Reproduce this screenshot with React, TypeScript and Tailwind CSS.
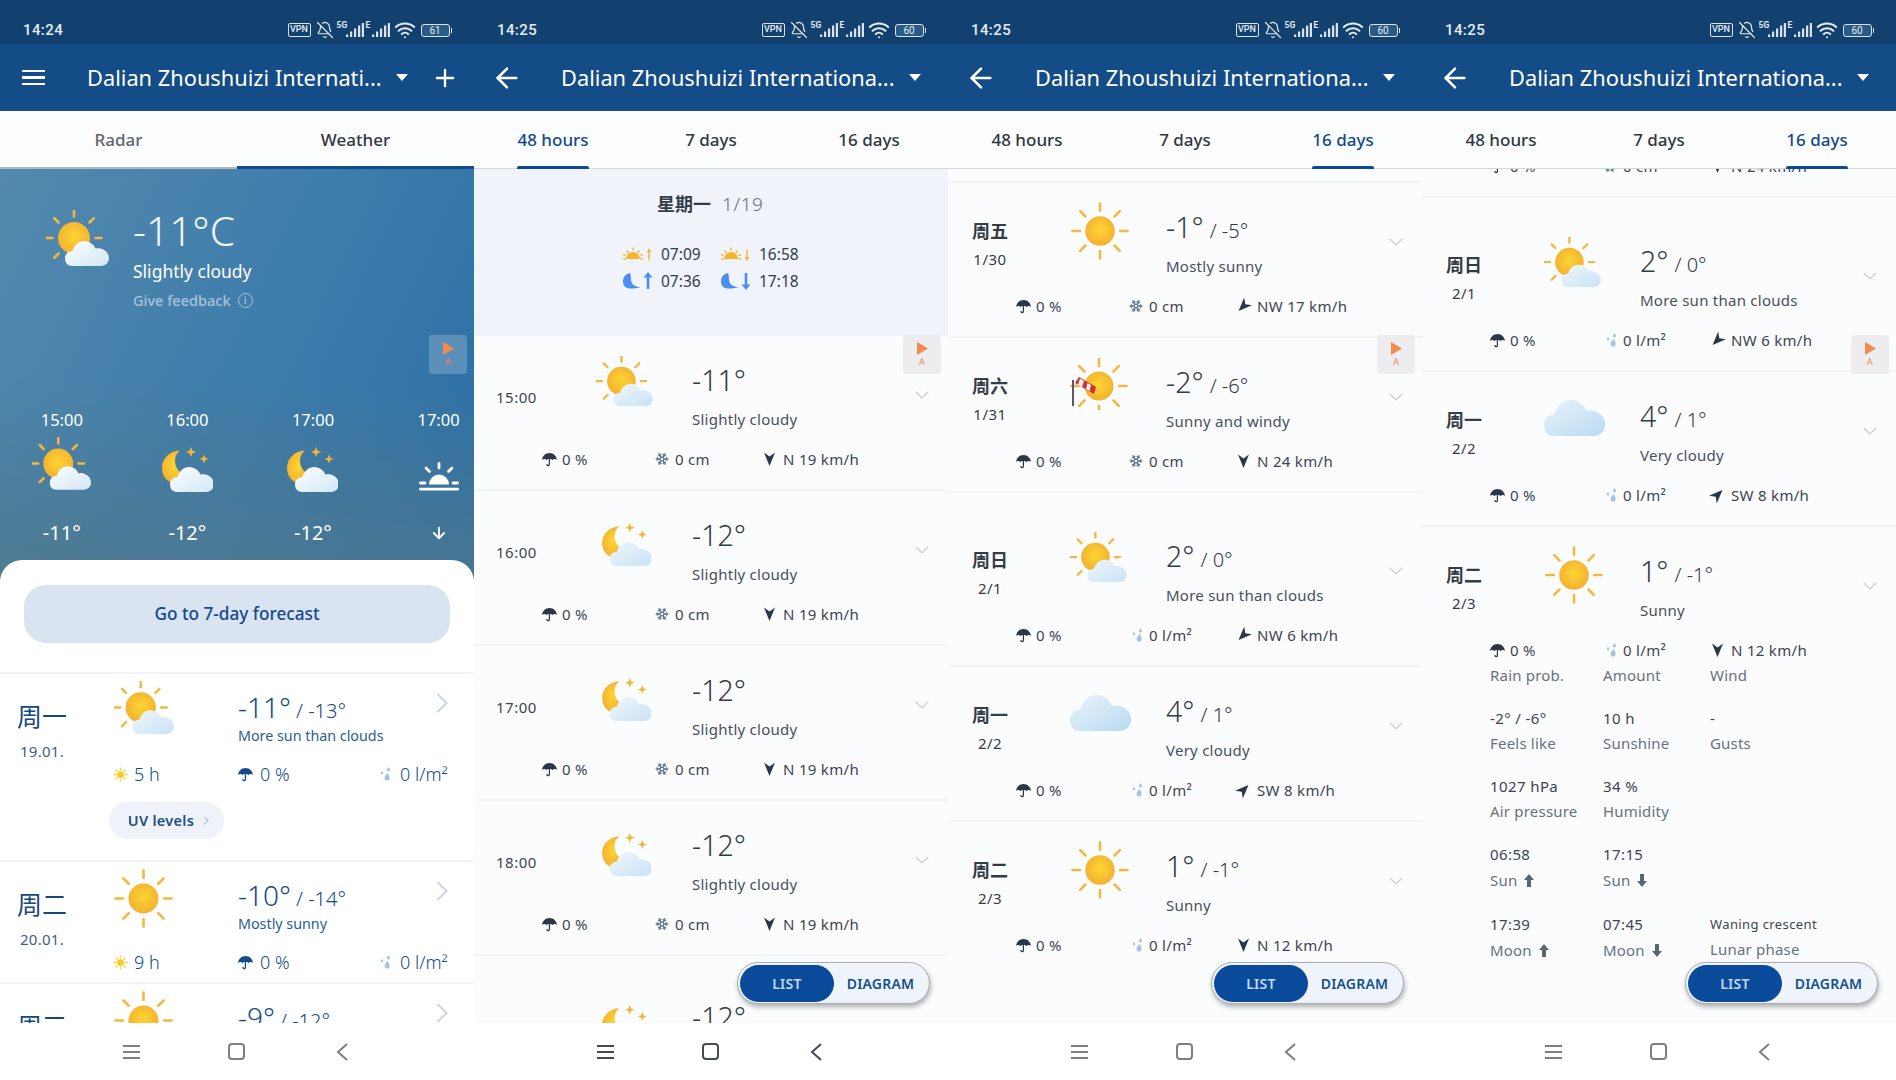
import React from 'react';
import { ArrowDown, ArrowLeft, BellOff, ChevronRight, Plus, Snowflake, Wifi } from 'lucide-react';

const CLOUD = 'M26 56C21 56 19 52 19 48.5 19 44 22 41 26.5 41 28 35 33 31 38 31 44 31 48 35 49.5 38.5 51 38 53 38 55 38.5 60 40 63 44 63 48 63 53 59 56 55 56Z';

const Defs = () => (
  <svg className="absolute h-0 w-0">
    <defs>
      <radialGradient id="sunG" cx="50%" cy="45%" r="60%">
        <stop offset="0%" stopColor="#fdd534" />
        <stop offset="100%" stopColor="#f2ad2f" />
      </radialGradient>
      <linearGradient id="cloudG" x1="0" y1="0" x2="1" y2="1">
        <stop offset="0%" stopColor="#fcfeff" />
        <stop offset="100%" stopColor="#d3e7f6" />
      </linearGradient>
      <linearGradient id="cloudL" x1="0" y1="0" x2="1" y2="1">
        <stop offset="0%" stopColor="#f0f7fc" />
        <stop offset="100%" stopColor="#c8e2f5" />
      </linearGradient>
      <linearGradient id="cloudB" x1="0" y1="0" x2="1" y2="1">
        <stop offset="0%" stopColor="#e9f3fb" />
        <stop offset="100%" stopColor="#b9daf2" />
      </linearGradient>
    </defs>
  </svg>
);

const Rays = ({ cx, cy, a, b, all = true }: { cx: number; cy: number; a: number; b: number; all?: boolean }) => {
  const k = 0.72;
  const list = [
    [0, -1],
    [-1, 0],
    [1, 0],
    [-k, -k],
    [k, -k],
    [-k, k],
  ];
  if (all) list.push([0, 1], [k, k]);
  return (
    <g stroke="#f4b83f" strokeWidth="2.6" strokeLinecap="round">
      {list.map(([x, y], i) => (
        <line key={i} x1={cx + x * a} y1={cy + y * a} x2={cx + x * b} y2={cy + y * b} />
      ))}
    </g>
  );
};

const SunCloud = ({ className, list }: { className: string; list?: boolean }) => (
  <svg viewBox="0 0 64 57" className={className}>
    <Rays cx={28} cy={28} a={21.5} b={27.5} all={false} />
    <circle cx="28" cy="28" r="16" fill="url(#sunG)" />
    <path d={CLOUD} fill={list ? 'url(#cloudL)' : 'url(#cloudG)'} />
  </svg>
);

const MoonCloud = ({ className, list }: { className: string; list?: boolean }) => (
  <svg viewBox="0 0 51 45" className={className}>
    <path d="M18 3.5C8 4 0 11 0 21 0 30 6 36 14 37L23 27C16 26 13 19 13 14 13 9 15 6 18 3.5Z" fill="url(#sunG)" />
    <path d="M29 0 30.4 3.6 34 5 30.4 6.4 29 10 27.6 6.4 24 5 27.6 3.6ZM42 7.5 43.3 10.7 46.5 12 43.3 13.3 42 16.5 40.7 13.3 37.5 12 40.7 10.7Z" fill="#f5b52f" />
    <g transform="translate(-11 -11)">
      <path d={CLOUD} fill={list ? 'url(#cloudL)' : 'url(#cloudG)'} />
    </g>
  </svg>
);

const Sun = ({ className }: { className: string }) => (
  <svg viewBox="0 0 59 59" className={className}>
    <Rays cx={29.5} cy={29.5} a={20.5} b={28} />
    <circle cx="29.5" cy="29.5" r="15" fill="url(#sunG)" />
  </svg>
);

const CloudOnly = ({ className }: { className: string }) => (
  <svg viewBox="0 0 61 36" className={className}>
    <g transform="scale(1.39 1.44) translate(-19 -31)">
      <path d={CLOUD} fill="url(#cloudB)" />
    </g>
  </svg>
);

const SunWind = ({ className }: { className: string }) => (
  <svg viewBox="0 0 60 52" className={className}>
    <Rays cx={29} cy={28} a={20} b={27.5} />
    <circle cx="29" cy="28" r="14.5" fill="url(#sunG)" />
    <rect x="2" y="22" width="2" height="26" fill="#555c66" />
    <path d="M5 25 9 19 26 29 24 36Z" fill="#d42f35" />
    <path d="M10 20.5 14 23 12 29 8 27ZM17.5 25 21 27 19.5 33 16 31Z" fill="#f6f6f6" />
  </svg>
);

const Sunset = () => (
  <svg viewBox="0 0 40 29" className="h-[29px] w-[40px]">
    <path d="M10 22.5A10 10 0 0 1 30 22.5Z" fill="#fff" />
    <g stroke="#fff" strokeWidth="2.8" strokeLinecap="round">
      <line x1="20" y1="1.5" x2="20" y2="6" />
      <line x1="7" y1="6" x2="10.5" y2="9.5" />
      <line x1="33" y1="6" x2="29.5" y2="9.5" />
      <line x1="1.5" y1="21" x2="6" y2="21" />
      <line x1="34" y1="21" x2="38.5" y2="21" />
      <line x1="1.5" y1="27.2" x2="38.5" y2="27.2" />
    </g>
  </svg>
);

const Umbrella = ({ className = '' }: { className?: string }) => (
  <svg viewBox="0 0 15 15" className={`h-[15px] w-[15px] ${className}`} fill="currentColor">
    <path d="M7.5 1C3.5 1 .6 3.9 0 7.8 1.5 6.7 3 6.7 4.6 7.9 5.3 7.1 6 6.9 6.8 6.9V12.2C6.8 13 6.2 13.1 5.9 12.9 5.6 12.7 5.5 12.3 5.5 12H4.3C4.3 13.3 5 14.3 6.2 14.3 7.4 14.3 8 13.4 8 12.2V6.9C9 6.9 9.7 7.1 10.4 7.9 12 6.7 13.5 6.7 15 7.8 14.4 3.9 11.5 1 7.5 1Z" />
  </svg>
);

const Drops = ({ className = '' }: { className?: string }) => (
  <svg viewBox="0 0 12 14" className={`h-[14px] w-[12px] ${className}`} fill="#a6c1e3">
    <path d="M8.5 0C9 1.2 10 1.8 10 3 10 3.9 9.3 4.4 8.5 4.4 7.7 4.4 7 3.9 7 3 7 1.8 8 1.2 8.5 0Z" />
    <path d="M2 3.8C2.4 4.8 3.2 5.3 3.2 6.2 3.2 7 2.7 7.4 2 7.4 1.3 7.4.8 7 .8 6.2.8 5.3 1.6 4.8 2 3.8Z" />
    <path d="M7.5 6C8.2 7.6 9.6 8.6 9.6 10.4 9.6 12 8.7 13.6 7.1 13.6 5.6 13.6 4.6 12.4 4.6 10.7 4.6 8.8 6.6 7.8 7.5 6Z" />
  </svg>
);

const WindArrow = ({ className = '' }: { className?: string }) => (
  <svg viewBox="0 0 11 14" className={`h-[14px] w-[11px] ${className}`} fill="#2b3646">
    <path d="M0 .5 5.5 4.5 11 .5 5.5 14Z" />
  </svg>
);

const Flake = () => <Snowflake size={14} strokeWidth={2.4} color="#6c7c8f" />;

const FatArrow = ({ up }: { up: boolean }) => (
  <svg viewBox="0 0 10 13" className={`ml-[7px] h-[13px] w-[10px] ${up ? '' : 'rotate-180'}`} fill="#5a6572">
    <path d="M5 0 10 6H7V13H3V6H0Z" />
  </svg>
);

const PlayBadge = ({ light }: { light?: boolean }) => (
  <div className={`absolute right-[7px] top-[335px] flex h-[39px] w-[38px] flex-col items-center rounded-[3px] pt-[7px] ${light ? 'bg-white/20' : 'bg-[#ededf0]'}`}>
    <svg viewBox="0 0 12 14" className="h-[13px] w-[11px]">
      <path d="M0 0 12 7 0 14Z" fill="#f28b4b" />
    </svg>
    <span className="mt-[1px] text-[9px] leading-[12px] text-[#f28b4b]">A</span>
  </div>
);

const Bars = () => (
  <svg viewBox="0 0 18 14" className="h-[14px] w-[18px]" fill="#dbe4ee">
    <rect x="0" y="11.5" width="2.2" height="2.5" />
    <rect x="4" y="8.5" width="2.2" height="5.5" />
    <rect x="8" y="5.5" width="2.2" height="8.5" />
    <rect x="12" y="2.5" width="2.2" height="11.5" />
    <rect x="15.8" y="0" width="2.2" height="14" />
  </svg>
);

const StatusBar = ({ time, battery }: { time: string; battery: string }) => (
  <div className="flex h-[44px] shrink-0 items-center bg-[#13416f] pl-[23px] pr-[22px] pt-[16px] text-[#e4ebf2]">
    <span className="font-['Roboto',sans-serif] text-[15px] font-medium tracking-[0.4px]">{time}</span>
    <div className="ml-auto flex items-center">
      <span className="flex h-[14px] w-[23px] items-center justify-center rounded-[2px] border border-[#dbe4ee] font-['Roboto',sans-serif] text-[9px] font-medium">VPN</span>
      <BellOff size={18} strokeWidth={1.6} className="ml-[5px]" />
      <div className="relative ml-[3px] flex items-end pl-[9px]">
        <span className="absolute left-0 top-[-4px] font-['Roboto',sans-serif] text-[8.5px] font-bold">5G</span>
        <Bars />
      </div>
      <div className="relative ml-[2px] flex items-end pl-[6px]">
        <span className="absolute left-0 top-[-4px] font-['Roboto',sans-serif] text-[8.5px] font-bold">E</span>
        <Bars />
      </div>
      <Wifi size={22} strokeWidth={2.2} className="ml-[4px]" />
      <div className="ml-[5px] flex items-center">
        <span className="flex h-[13px] w-[29px] items-center justify-center rounded-[3px] border border-[#dbe4ee] bg-[#3b6a97]/60 font-['Roboto',sans-serif] text-[10px]">{battery}</span>
        <span className="ml-[1px] h-[5px] w-[1.5px] bg-[#dbe4ee]" />
      </div>
    </div>
  </div>
);

const Caret = () => (
  <svg viewBox="0 0 12 7" className="h-[7px] w-[12px]">
    <path d="M0 0H12L6 7Z" fill="#fff" />
  </svg>
);

const Header = ({ title, first, plus }: { title: string; first: React.ReactNode; plus?: boolean }) => (
  <div className="flex h-[67px] shrink-0 items-center bg-[#134c86] text-white">
    <div className="w-[87px] shrink-0 pl-[22px]">{first}</div>
    <span className="whitespace-nowrap pt-[1px] text-[21.8px]">{title}</span>
    <div className="ml-[14px]">
      <Caret />
    </div>
    {plus && <Plus size={28} strokeWidth={2} className="ml-[23px]" />}
  </div>
);

const Burger = () => (
  <div className="flex w-[23px] flex-col gap-[4px]">
    <span className="h-[2.5px] bg-white" />
    <span className="h-[2.5px] bg-white" />
    <span className="h-[2.5px] bg-white" />
  </div>
);

const Back = () => <ArrowLeft size={32} strokeWidth={1.9} className="-ml-[5px]" />;

const DayTabs = ({ active }: { active: number }) => (
  <div className="grid h-[58px] shrink-0 grid-cols-3 border-b border-[#d3d7de] bg-[#fcfdfe] text-[17px] font-medium">
    {['48 hours', '7 days', '16 days'].map((t, i) => (
      <div key={t} className={`flex items-center justify-center ${i === active ? 'text-[#13498c]' : 'text-[#2e3742]'}`}>
        <div className="relative flex h-full items-center">
          {t}
          {i === active && <span className="absolute bottom-[-1px] left-0 right-0 h-[3px] rounded-t-[2px] bg-[#0b4a9a]" />}
        </div>
      </div>
    ))}
  </div>
);

const NavBar = ({ dark }: { dark?: boolean }) => {
  const c = dark ? 'border-[#444b54]' : 'border-[#7b7f85]';
  const b = dark ? 'bg-[#444b54]' : 'bg-[#7b7f85]';
  return (
    <div className="flex h-[57px] shrink-0 items-center bg-white pl-[123px]">
      <div className="flex w-[17px] flex-col gap-[4px]">
        <span className={`h-[2px] ${b}`} />
        <span className={`h-[2px] ${b}`} />
        <span className={`h-[2px] ${b}`} />
      </div>
      <div className={`ml-[88px] h-[17px] w-[17px] rounded-[4px] border-2 ${c}`} />
      <svg viewBox="0 0 12 18" className="ml-[91px] h-[18px] w-[12px]" fill="none" stroke={dark ? '#444b54' : '#7b7f85'} strokeWidth="2">
        <path d="M11 1 2 9 11 17" />
      </svg>
    </div>
  );
};

const Chevron = () => (
  <svg viewBox="0 0 14 8" className="h-[8px] w-[14px]" fill="none" stroke="#c6cdd6" strokeWidth="1.2">
    <path d="M1 1 7 7 13 1" />
  </svg>
);

const BlueChevron = () => (
  <svg viewBox="0 0 12 20" className="h-[20px] w-[12px]" fill="none" stroke="#c8d3e3" strokeWidth="1.8">
    <path d="M1.5 1 10.5 10 1.5 19" />
  </svg>
);

interface StatProps {
  wind: string;
  windClass?: string;
  amount?: boolean;
}

const Stats = ({ wind, windClass, amount }: StatProps) => (
  <div className="flex h-[24px] items-center pl-[68px] text-[15px] tracking-[0.3px] text-[#3b4552]">
    <div className="flex w-[113px] items-center">
      <div className="w-[20px]">
        <Umbrella className="text-[#2b3646]" />
      </div>
      0 %
    </div>
    <div className="flex w-[108px] items-center">
      <div className="w-[20px]">{amount ? <Drops className="ml-[3px]" /> : <Flake />}</div>
      {amount ? '0 l/m²' : '0 cm'}
    </div>
    <div className="flex items-center">
      <div className="w-[20px] pl-[1px]">
        <WindArrow className={windClass} />
      </div>
      {wind}
    </div>
  </div>
);

const TimeCell = ({ t }: { t: string }) => <div className="pl-[22px] pt-[49px] text-[15px] leading-[24px] tracking-[0.5px] text-[#3b4552]">{t}</div>;

const DayCell = ({ d, date }: { d: string; date: string }) => (
  <div className="w-[84px] pt-[34px] text-center text-[#343c47]">
    <div className="text-[18px] font-bold leading-[28px]">{d}</div>
    <div className="mt-[2px] text-[15px] leading-[24px] tracking-[0.5px]">{date}</div>
  </div>
);

interface RowProps {
  left: React.ReactNode;
  icon: React.ReactNode;
  hi: string;
  lo?: string;
  desc: string;
  tall?: boolean;
  last?: boolean;
  stats: StatProps;
  children?: React.ReactNode;
}

const Row = ({ left, icon, hi, lo, desc, tall, last, stats, children }: RowProps) => (
  <div className={`${last ? 'pb-[100px]' : 'border-b-2 border-[#f2f4fa]'} ${tall ? 'h-[174px] pt-[19px]' : last ? '' : 'h-[155px]'}`}>
    <div className="flex h-[111px]">
      <div className="w-[122px] shrink-0">{left}</div>
      <div className="w-[96px] shrink-0 pt-[20px]">{icon}</div>
      <div className="flex-1 pt-[24px] text-[#343c47]">
        <div className="flex h-[40px] items-baseline whitespace-nowrap font-light">
          <span className="text-[28.5px] leading-[40px]">{hi}</span>
          {lo && <span className="ml-[6px] text-[20px] leading-[40px]">/ {lo}</span>}
        </div>
        <div className="mt-[7px] text-[15px] leading-[24px] tracking-[0.25px] text-[#47505c]">{desc}</div>
      </div>
      <div className="flex w-[52px] shrink-0 justify-center pt-[55px]">
        <div className="h-[8px]">
          <Chevron />
        </div>
      </div>
    </div>
    <Stats {...stats} />
    {children}
  </div>
);

const DetailCell = ({ v, l, small, arrow }: { v: string; l: string; small?: boolean; arrow?: 'up' | 'down' }) => (
  <div>
    <div className={`flex h-[25px] items-center whitespace-nowrap tracking-[0.4px] text-[#3b4552] ${small ? 'text-[13px]' : 'text-[15px]'}`}>{v}</div>
    <div className={`flex items-center whitespace-nowrap tracking-[0.2px] text-[#68717d] ${arrow ? 'h-[26px]' : 'h-[25px]'}`}>
      {l}
      {arrow && <FatArrow up={arrow === 'up'} />}
    </div>
  </div>
);

const Toggle = () => (
  <div className="absolute bottom-[76px] right-[18px] flex h-[42px] w-[193px] items-center rounded-full border border-[#a9adb3] bg-[#eff3fa] p-[2px] shadow-[1px_3px_5px_rgba(0,0,0,0.3)]">
    <div className="flex h-[37px] w-[94px] items-center justify-center rounded-full bg-[#0a4a9b] text-[14px] font-semibold tracking-[0.3px] text-[#c3d8f2]">LIST</div>
    <div className="flex-1 text-center text-[14px] font-semibold tracking-[0.2px] text-[#13508f]">DIAGRAM</div>
  </div>
);

const Phone = ({ children }: { children: React.ReactNode }) => <div className="relative flex h-[1080px] w-[474px] shrink-0 flex-col overflow-hidden bg-white">{children}</div>;

const hours = [
  { t: '15:00', v: '-11°', icon: <SunCloud className="h-[54px] w-[60px]" /> },
  { t: '16:00', v: '-12°', icon: <MoonCloud className="mt-[10px] h-[45px] w-[51px]" /> },
  { t: '17:00', v: '-12°', icon: <MoonCloud className="mt-[10px] h-[45px] w-[51px]" /> },
];

const hist = [
  { d: '周一', date: '19.01.', icon: <SunCloud list className="h-[54px] w-[61px]" />, hi: '-11°', lo: '-13°', desc: 'More sun than clouds', sun: '5 h', uv: true },
  { d: '周二', date: '20.01.', icon: <Sun className="h-[59px] w-[59px]" />, hi: '-10°', lo: '-14°', desc: 'Mostly sunny', sun: '9 h', uv: false },
  { d: '周三', date: '21.01.', icon: <Sun className="h-[59px] w-[59px]" />, hi: '-9°', lo: '-12°', desc: 'Mostly sunny', sun: '9 h', uv: false },
];

const SunTiny = () => (
  <svg viewBox="0 0 16 16" className="h-[15px] w-[15px]">
    <g stroke="#fbd32d" strokeWidth="1.4" strokeLinecap="round">
      {[0, 45, 90, 135, 180, 225, 270, 315].map(a => (
        <line key={a} x1="8" y1="1" x2="8" y2="3" transform={`rotate(${a} 8 8)`} />
      ))}
    </g>
    <circle cx="8" cy="8" r="3.6" fill="#fccb20" />
  </svg>
);

const SunRiseMini = ({ up }: { up: boolean }) => (
  <svg viewBox="0 0 30 14" className="h-[14px] w-[30px]">
    <path d="M3 13A7 7 0 0 1 17 13Z" fill="#f9b42d" transform="translate(0 -1)" />
    <g stroke="#f9b42d" strokeWidth="1.4" strokeLinecap="round">
      <line x1="10" y1="1" x2="10" y2="3" />
      <line x1="4" y1="4" x2="5" y2="5.5" />
      <line x1="16" y1="4" x2="15" y2="5.5" />
      <line x1="0.5" y1="8" x2="2" y2="8" />
      <line x1="18" y1="8" x2="19.5" y2="8" />
      <line x1="0.5" y1="12" x2="2" y2="12" />
      <line x1="18" y1="12" x2="19.5" y2="12" />
      <line x1="26" y1="3" x2="26" y2="13" />
    </g>
    <path d={up ? 'M23.5 5 26 1.5 28.5 5Z' : 'M23.5 10 26 13.5 28.5 10Z'} fill="#f9b42d" />
  </svg>
);

const MoonMini = ({ up }: { up: boolean }) => (
  <svg viewBox="0 0 30 18" className="h-[18px] w-[30px]">
    <path d="M7 1C2.5 2 0 5 0 9.5 0 14 3 16.5 7.5 16.5 11 16.5 14 16 18 15 12 15 8.5 12.5 8 8 7.8 5.5 8 3.5 7 1Z" fill="#4a8ff0" />
    <path d={up ? 'M25 0 29.5 5.5H26.3V17H23.7V5.5H20.5Z' : 'M25 18 29.5 12.5H26.3V1H23.7V12.5H20.5Z'} fill="#4a8ff0" />
  </svg>
);

const details = [
  [
    { v: '-2° / -6°', l: 'Feels like' },
    { v: '10 h', l: 'Sunshine' },
    { v: '-', l: 'Gusts' },
  ],
  [
    { v: '1027 hPa', l: 'Air pressure' },
    { v: '34 %', l: 'Humidity' },
  ],
  [
    { v: '06:58', l: 'Sun', arrow: 'up' as const },
    { v: '17:15', l: 'Sun', arrow: 'down' as const },
  ],
  [
    { v: '17:39', l: 'Moon', arrow: 'up' as const },
    { v: '07:45', l: 'Moon', arrow: 'down' as const },
    { v: 'Waning crescent', l: 'Lunar phase', small: true },
  ],
];

const sunCloudL = <SunCloud list className="h-[51px] w-[58px]" />;
const moonL = <MoonCloud list className="ml-[6px] mt-[12px] h-[43px] w-[49px]" />;
const sunL = <Sun className="ml-[1px] -mt-[1px] h-[58px] w-[58px]" />;
const cloudL = <CloudOnly className="mt-[8px] h-[36px] w-[61px]" />;
const windL = <SunWind className="h-[52px] w-[60px]" />;

export default function App() {
  return (
    <div className="flex h-[1080px] w-[1896px] overflow-hidden bg-white font-['Noto_Sans','Noto_Sans_CJK_SC',sans-serif]">
      <Defs />
      {/* radar / weather */}
      <Phone>
        <StatusBar time="14:24" battery="61" />
        <Header title="Dalian Zhoushuizi Internati..." first={<Burger />} plus />
        <div className="flex h-[58px] shrink-0 bg-[#fcfdfe] text-[17px] font-medium">
          <div className="flex w-[237px] items-center justify-center border-b-2 border-[#b5b9bf] pt-[2px] text-[#5e6670]">Radar</div>
          <div className="flex w-[237px] items-center justify-center border-b-[3px] border-[#134a8e] pt-[3px] text-[#2e3742]">Weather</div>
        </div>
        <div className="h-[413px] shrink-0 bg-[linear-gradient(180deg,rgba(82,120,138,0)_50%,rgba(82,120,138,0.75)_100%),linear-gradient(115deg,#5389ae_0%,#3f7dab_50%,#296ea5_100%)] text-white">
          <div className="flex pl-[46px] pt-[41px]">
            <SunCloud className="h-[57px] w-[64px]" />
            <div className="ml-[23px] -mt-[6px]">
              <div className="text-[40.5px] font-light leading-[54px] text-[#f0f5f9]">-11°C</div>
              <div className="mt-[1px] text-[17.5px] leading-[24px]">Slightly cloudy</div>
              <div className="mt-[7px] flex items-center text-[14.5px] font-medium leading-[20px] text-[#a8c3d9]">
                Give feedback
                <span className="ml-[7px] flex h-[15px] w-[15px] items-center justify-center rounded-full border border-[#a8c3d9] text-[10px] leading-none">i</span>
              </div>
            </div>
          </div>
          <div className="mt-[98px] -ml-[1px] flex">
            {hours.map(h => (
              <div key={h.t} className="flex w-[125.6px] shrink-0 flex-col items-center">
                <div className="h-[24px] text-[16.5px] leading-[24px]">{h.t}</div>
                <div className="mt-[5px] h-[60px]">{h.icon}</div>
                <div className="mt-[22px] text-[20px] leading-[28px]">{h.v}</div>
              </div>
            ))}
            <div className="flex w-[125.6px] shrink-0 flex-col items-center">
              <div className="h-[24px] text-[16.5px] leading-[24px]">17:00</div>
              <div className="mt-[5px] flex h-[60px] items-end pb-[6px]">
                <Sunset />
              </div>
              <div className="mt-[22px] flex h-[28px] items-center">
                <ArrowDown size={18} strokeWidth={2.4} />
              </div>
            </div>
          </div>
        </div>
        <div className="relative -mt-[22px] flex-1 overflow-hidden rounded-t-[22px] bg-white">
          <div className="h-[92px] px-[24px] pt-[25px]">
            <div className="flex h-[58px] items-center justify-center rounded-[22px] bg-[#dae3f0] text-[17.2px] font-medium text-[#134a8e]">Go to 7-day forecast</div>
          </div>
          <div className="mt-[20px]">
            {hist.map(r => (
              <div key={r.d} className={`border-t-2 border-[#eef1f5] ${r.uv ? 'h-[188px]' : 'h-[122px]'}`}>
                <div className="flex h-[88px]">
                  <div className="w-[84px] shrink-0 pt-[26px] text-center text-[#14487f]">
                    <div className="text-[25px] leading-[32px]">{r.d}</div>
                    <div className="mt-[7px] text-[15px] leading-[24px] tracking-[0.3px] text-[#3d5f85]">{r.date}</div>
                  </div>
                  <div className="w-[154px] shrink-0 pl-[30px] pt-[7px]">{r.icon}</div>
                  <div className="flex-1 pt-[13px] text-[#134a8a]">
                    <div className="flex h-[40px] items-baseline whitespace-nowrap font-light">
                      <span className="text-[28px] leading-[40px]">{r.hi}</span>
                      <span className="ml-[5px] text-[20px] leading-[40px]">/ {r.lo}</span>
                    </div>
                    <div className="-mt-[1px] text-[14.3px] leading-[20px] text-[#2a5d96]">{r.desc}</div>
                  </div>
                  <div className="w-[42px] shrink-0 pl-[4px] pt-[19px]">
                    <BlueChevron />
                  </div>
                </div>
                <div className="flex h-[24px] items-center pl-[113px] text-[18px] font-light text-[#134a8a]">
                  <div className="flex w-[125px] items-center">
                    <SunTiny />
                    <span className="ml-[6px]">{r.sun}</span>
                  </div>
                  <div className="flex w-[142px] items-center">
                    <Umbrella />
                    <span className="ml-[7px]">0 %</span>
                  </div>
                  <div className="flex items-center">
                    <Drops />
                    <span className="ml-[8px] whitespace-nowrap">0 l/m²</span>
                  </div>
                </div>
                {r.uv && (
                  <div className="ml-[109px] mt-[16px] flex h-[37px] w-[115px] items-center justify-center rounded-full bg-[#eff2f9] pl-[8px] text-[14.5px] font-semibold tracking-[0.3px] text-[#1b4f8a]">
                    UV levels
                    <ChevronRight size={13} color="#b8c2d0" className="ml-[6px]" />
                  </div>
                )}
              </div>
            ))}
          </div>
        </div>
        <NavBar />
        <PlayBadge light />
      </Phone>

      {/* 48 hours */}
      <Phone>
        <StatusBar time="14:25" battery="60" />
        <Header title="Dalian Zhoushuizi Internationa..." first={<Back />} />
        <DayTabs active={0} />
        <div className="flex-1 overflow-hidden bg-[#fbfcfe]">
          <div className="h-[167px] bg-[#f0f3f9] pt-[22px] text-[#343c47]">
            <div className="flex h-[26px] items-center pl-[183px] text-[18px]">
              <span className="font-bold">星期一</span>
              <span className="ml-[11px] text-[19px] font-light tracking-[0.6px] text-[#68717d]">1/19</span>
            </div>
            <div className="mt-[25px] grid w-[300px] grid-cols-[98px_80px] gap-y-[3px] pl-[149px] text-[15.5px] leading-[24px]">
              <div className="flex items-center">
                <SunRiseMini up />
                <span className="ml-[8px]">07:09</span>
              </div>
              <div className="flex items-center">
                <SunRiseMini up={false} />
                <span className="ml-[8px]">16:58</span>
              </div>
              <div className="flex items-center">
                <MoonMini up />
                <span className="ml-[8px]">07:36</span>
              </div>
              <div className="flex items-center">
                <MoonMini up={false} />
                <span className="ml-[8px]">17:18</span>
              </div>
            </div>
          </div>
          <Row left={<TimeCell t="15:00" />} icon={sunCloudL} hi="-11°" desc="Slightly cloudy" stats={{ wind: 'N 19 km/h' }} />
          <Row left={<TimeCell t="16:00" />} icon={moonL} hi="-12°" desc="Slightly cloudy" stats={{ wind: 'N 19 km/h' }} />
          <Row left={<TimeCell t="17:00" />} icon={moonL} hi="-12°" desc="Slightly cloudy" stats={{ wind: 'N 19 km/h' }} />
          <Row left={<TimeCell t="18:00" />} icon={moonL} hi="-12°" desc="Slightly cloudy" stats={{ wind: 'N 19 km/h' }} />
          <div className="pt-[17px]">
            <Row left={<TimeCell t="19:00" />} icon={moonL} hi="-12°" desc="Slightly cloudy" stats={{ wind: 'N 19 km/h' }} />
          </div>
        </div>
        <NavBar dark />
        <PlayBadge />
        <Toggle />
      </Phone>

      {/* 16 days */}
      <Phone>
        <StatusBar time="14:25" battery="60" />
        <Header title="Dalian Zhoushuizi Internationa..." first={<Back />} />
        <DayTabs active={2} />
        <div className="flex-1 overflow-hidden bg-[#fbfcfe]">
          <div className="h-[14px] border-b-2 border-[#f2f4fa]" />
          <Row left={<DayCell d="周五" date="1/30" />} icon={sunL} hi="-1°" lo="-5°" desc="Mostly sunny" stats={{ wind: 'NW 17 km/h', windClass: 'rotate-45' }} />
          <Row left={<DayCell d="周六" date="1/31" />} icon={windL} hi="-2°" lo="-6°" desc="Sunny and windy" stats={{ wind: 'N 24 km/h' }} />
          <Row tall left={<DayCell d="周日" date="2/1" />} icon={sunCloudL} hi="2°" lo="0°" desc="More sun than clouds" stats={{ wind: 'NW 6 km/h', windClass: 'rotate-45', amount: true }} />
          <Row left={<DayCell d="周一" date="2/2" />} icon={cloudL} hi="4°" lo="1°" desc="Very cloudy" stats={{ wind: 'SW 8 km/h', windClass: 'rotate-[225deg]', amount: true }} />
          <Row last left={<DayCell d="周二" date="2/3" />} icon={sunL} hi="1°" lo="-1°" desc="Sunny" stats={{ wind: 'N 12 km/h', amount: true }} />
        </div>
        <NavBar />
        <PlayBadge />
        <Toggle />
      </Phone>

      {/* 16 days, one day opened */}
      <Phone>
        <StatusBar time="14:25" battery="60" />
        <Header title="Dalian Zhoushuizi Internationa..." first={<Back />} />
        <DayTabs active={2} />
        <div className="flex-1 overflow-hidden bg-[#fbfcfe]">
          <div className="-mt-[126px]">
            <Row left={<DayCell d="周六" date="1/31" />} icon={windL} hi="-2°" lo="-6°" desc="Sunny and windy" stats={{ wind: 'N 24 km/h' }} />
            <Row tall left={<DayCell d="周日" date="2/1" />} icon={sunCloudL} hi="2°" lo="0°" desc="More sun than clouds" stats={{ wind: 'NW 6 km/h', windClass: 'rotate-45', amount: true }} />
            <Row left={<DayCell d="周一" date="2/2" />} icon={cloudL} hi="4°" lo="1°" desc="Very cloudy" stats={{ wind: 'SW 8 km/h', windClass: 'rotate-[225deg]', amount: true }} />
            <Row last left={<DayCell d="周二" date="2/3" />} icon={sunL} hi="1°" lo="-1°" desc="Sunny" stats={{ wind: 'N 12 km/h', amount: true }}>
              <div className="pl-[68px] text-[15px]">
                <div className="flex h-[26px] items-center tracking-[0.2px] text-[#68717d]">
                  <span className="w-[113px]">Rain prob.</span>
                  <span className="w-[107px]">Amount</span>
                  <span>Wind</span>
                </div>
                {details.map((d, i) => (
                  <div key={i} className={`grid grid-cols-[113px_107px_1fr] ${i === 3 ? 'mt-[19px]' : 'mt-[18px]'}`}>
                    {d.map(c => (
                      <DetailCell key={c.v} {...c} />
                    ))}
                  </div>
                ))}
              </div>
            </Row>
          </div>
        </div>
        <NavBar />
        <PlayBadge />
        <Toggle />
      </Phone>
    </div>
  );
}
